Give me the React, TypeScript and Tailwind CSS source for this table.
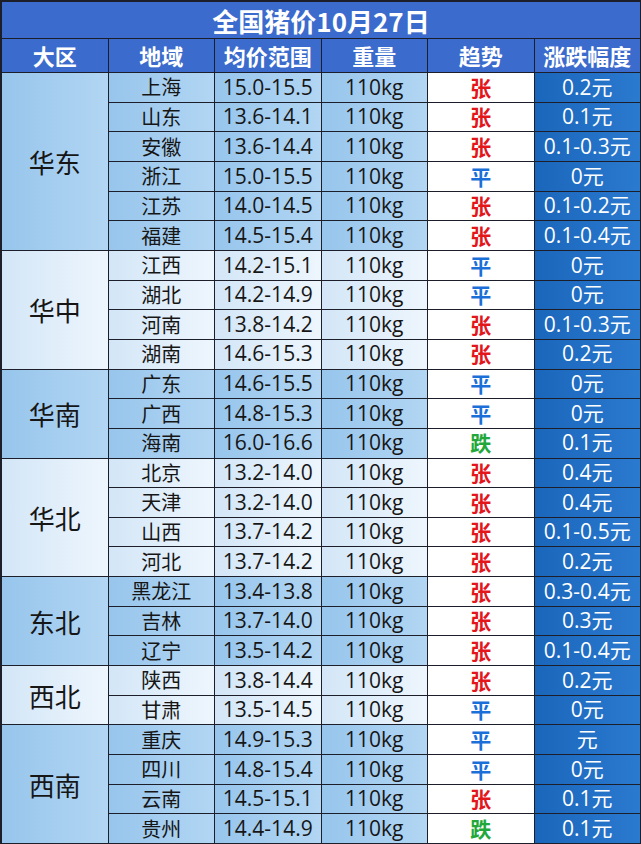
import React from 'react';

type Row = { area: string; price: string; trend: '张' | '平' | '跌'; change: string };
type Group = { region: string; rows: Row[] };

const groups: Group[] = [
  {
    region: '华东',
    rows: [
      { area: '上海', price: '15.0-15.5', trend: '张', change: '0.2元' },
      { area: '山东', price: '13.6-14.1', trend: '张', change: '0.1元' },
      { area: '安徽', price: '13.6-14.4', trend: '张', change: '0.1-0.3元' },
      { area: '浙江', price: '15.0-15.5', trend: '平', change: '0元' },
      { area: '江苏', price: '14.0-14.5', trend: '张', change: '0.1-0.2元' },
      { area: '福建', price: '14.5-15.4', trend: '张', change: '0.1-0.4元' },
    ],
  },
  {
    region: '华中',
    rows: [
      { area: '江西', price: '14.2-15.1', trend: '平', change: '0元' },
      { area: '湖北', price: '14.2-14.9', trend: '平', change: '0元' },
      { area: '河南', price: '13.8-14.2', trend: '张', change: '0.1-0.3元' },
      { area: '湖南', price: '14.6-15.3', trend: '张', change: '0.2元' },
    ],
  },
  {
    region: '华南',
    rows: [
      { area: '广东', price: '14.6-15.5', trend: '平', change: '0元' },
      { area: '广西', price: '14.8-15.3', trend: '平', change: '0元' },
      { area: '海南', price: '16.0-16.6', trend: '跌', change: '0.1元' },
    ],
  },
  {
    region: '华北',
    rows: [
      { area: '北京', price: '13.2-14.0', trend: '张', change: '0.4元' },
      { area: '天津', price: '13.2-14.0', trend: '张', change: '0.4元' },
      { area: '山西', price: '13.7-14.2', trend: '张', change: '0.1-0.5元' },
      { area: '河北', price: '13.7-14.2', trend: '张', change: '0.2元' },
    ],
  },
  {
    region: '东北',
    rows: [
      { area: '黑龙江', price: '13.4-13.8', trend: '张', change: '0.3-0.4元' },
      { area: '吉林', price: '13.7-14.0', trend: '张', change: '0.3元' },
      { area: '辽宁', price: '13.5-14.2', trend: '张', change: '0.1-0.4元' },
    ],
  },
  {
    region: '西北',
    rows: [
      { area: '陕西', price: '13.8-14.4', trend: '张', change: '0.2元' },
      { area: '甘肃', price: '13.5-14.5', trend: '平', change: '0元' },
    ],
  },
  {
    region: '西南',
    rows: [
      { area: '重庆', price: '14.9-15.3', trend: '平', change: '元' },
      { area: '四川', price: '14.8-15.4', trend: '平', change: '0元' },
      { area: '云南', price: '14.5-15.1', trend: '张', change: '0.1元' },
      { area: '贵州', price: '14.4-14.9', trend: '跌', change: '0.1元' },
    ],
  },
];

const spanClass: Record<number, string> = {
  2: 'row-span-2',
  3: 'row-span-3',
  4: 'row-span-4',
  6: 'row-span-6',
};

const trendColor: Record<Row['trend'], string> = {
  张: 'text-[#e3161b]',
  平: 'text-[#1b6fd9]',
  跌: 'text-[#22a83a]',
};

const num = "font-['Open_Sans','Noto_Sans_CJK_SC',sans-serif]";
const cjk = "font-['Noto_Sans_CJK_SC',sans-serif]";

export default function App() {
  return (
    <div className="w-[641px] h-[844px] bg-[#1c1f2a] p-[1px] pl-[2px] pt-[2px] grid grid-cols-6 grid-rows-[36px_33px_repeat(26,minmax(0,1fr))] gap-px">
      {/* Title */}
      <div className={`col-span-6 bg-[#3b6bcd] flex items-center justify-center text-white text-[26px] font-bold ${cjk}`}>
        全国猪价10月27日
      </div>

      {/* Header */}
      {['大区', '地域', '均价范围', '重量', '趋势', '涨跌幅度'].map((h) => (
        <div
          key={h}
          className={`bg-[#3b6bcd] flex items-center justify-center text-white text-[22px] font-bold ${cjk}`}
        >
          {h}
        </div>
      ))}

      {groups.map((g, gi) => {
        const blue = gi % 2 === 0;
        const cell = blue
          ? 'bg-gradient-to-r from-[#97c5ec] to-[#b2d6f3]'
          : 'bg-gradient-to-r from-[#d3e6f7] to-[#eef6fd]';
        return (
          <React.Fragment key={g.region}>
            <div
              className={`${spanClass[g.rows.length]} ${cell} flex items-center justify-center text-[#161616] text-[26px] ${cjk}`}
            >
              {g.region}
            </div>
            {g.rows.map((r) => (
              <React.Fragment key={r.area}>
                <div className={`${cell} flex items-center justify-center text-[#161616] text-[20px] ${cjk}`}>
                  {r.area}
                </div>
                <div className={`${cell} flex items-center justify-center text-[#161616] text-[21px] ${num}`}>
                  {r.price}
                </div>
                <div className={`${cell} flex items-center justify-center text-[#161616] text-[21px] ${num}`}>
                  110kg
                </div>
                <div className={`bg-white flex items-center justify-center text-[21px] font-bold ${cjk} ${trendColor[r.trend]}`}>
                  {r.trend}
                </div>
                <div className={`bg-gradient-to-r from-[#1a66bb] to-[#2a7ad0] flex items-center justify-center text-white text-[21px] ${num}`}>
                  {r.change}
                </div>
              </React.Fragment>
            ))}
          </React.Fragment>
        );
      })}
    </div>
  );
}
